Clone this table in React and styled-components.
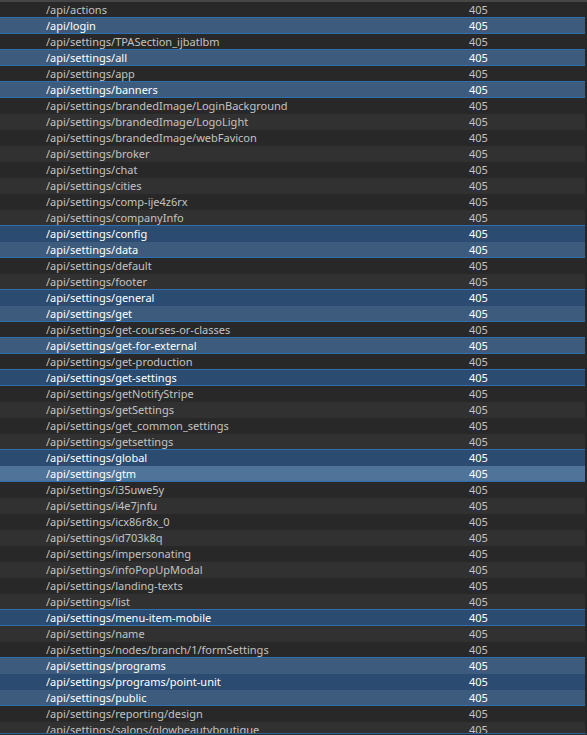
import React from "react";
import styled, { createGlobalStyle, css } from "styled-components";

const Global = createGlobalStyle`
  html, body { margin: 0; padding: 0; background: #2b2b2b; }
  body { font-family: "Noto Sans", "Open Sans", sans-serif; overflow: hidden; }
`;

const Frame = styled.div`
  width: 587px;
  height: 735px;
  box-sizing: border-box;
  border-top: 2px solid #464646;
  background: #2b2b2b;
  display: flex;
  flex-direction: column;
`;

const List = styled.div`
  height: 731px;
  overflow: hidden;
  border-bottom: 1px solid #2f6295;
  border-right: 2px solid #262626;
  display: flex;
  flex-direction: column;
`;

const tones = {
  even: { bg: "#282828", fg: "#c3c3c3" },
  odd: { bg: "#313131", fg: "#c3c3c3" },
  light: { bg: "#3d5c7d", fg: "#ffffff" },
  dark: { bg: "#2b4c70", fg: "#ffffff" },
  hot: { bg: "#4f7399", fg: "#ffffff" },
};

const LINE = "#2f6eae";

const Row = styled.div`
  flex: 0 0 16px;
  height: 16px;
  display: grid;
  grid-template-columns: 423px 1fr;
  padding-left: 46px;
  align-items: center;
  font-size: 11px;
  line-height: 16px;
  white-space: nowrap;
  background: ${(p) => tones[p.$tone].bg};
  color: ${(p) => tones[p.$tone].fg};
  ${(p) => {
    const s = [];
    if (p.$top) s.push(`0 -1px 0 ${LINE}`);
    if (p.$bottom) s.push(`inset 0 -1px 0 ${LINE}`);
    return s.length ? css`box-shadow: ${s.join(", ")};` : "";
  }}
`;

const Path = styled.span`
  overflow: hidden;
`;

const Code = styled.span``;

// [path, tone, topLine, bottomLine]
const rows = [
  ["/api/actions"],
  ["/api/login", "light", 1, 1],
  ["/api/settings/TPASection_ijbatlbm"],
  ["/api/settings/all", "light", 1, 1],
  ["/api/settings/app"],
  ["/api/settings/banners", "light", 1, 1],
  ["/api/settings/brandedImage/LoginBackground"],
  ["/api/settings/brandedImage/LogoLight"],
  ["/api/settings/brandedImage/webFavicon"],
  ["/api/settings/broker"],
  ["/api/settings/chat"],
  ["/api/settings/cities"],
  ["/api/settings/comp-ije4z6rx"],
  ["/api/settings/companyInfo"],
  ["/api/settings/config", "dark", 1, 0],
  ["/api/settings/data", "light", 0, 1],
  ["/api/settings/default"],
  ["/api/settings/footer"],
  ["/api/settings/general", "dark", 1, 0],
  ["/api/settings/get", "light", 0, 1],
  ["/api/settings/get-courses-or-classes"],
  ["/api/settings/get-for-external", "light", 1, 1],
  ["/api/settings/get-production"],
  ["/api/settings/get-settings", "dark", 1, 1],
  ["/api/settings/getNotifyStripe"],
  ["/api/settings/getSettings"],
  ["/api/settings/get_common_settings"],
  ["/api/settings/getsettings"],
  ["/api/settings/global", "dark", 1, 0],
  ["/api/settings/gtm", "hot", 0, 1],
  ["/api/settings/i35uwe5y"],
  ["/api/settings/i4e7jnfu"],
  ["/api/settings/icx86r8x_0"],
  ["/api/settings/id703k8q"],
  ["/api/settings/impersonating"],
  ["/api/settings/infoPopUpModal"],
  ["/api/settings/landing-texts"],
  ["/api/settings/list"],
  ["/api/settings/menu-item-mobile", "dark", 1, 1],
  ["/api/settings/name"],
  ["/api/settings/nodes/branch/1/formSettings"],
  ["/api/settings/programs", "light", 1, 0],
  ["/api/settings/programs/point-unit", "dark", 0, 0],
  ["/api/settings/public", "light", 0, 1],
  ["/api/settings/reporting/design"],
  ["/api/settings/salons/glowbeautyboutique"],
];

export default function App() {
  return (
    <>
      <Global />
      <Frame>
        <List>
          {rows.map(([path, tone, top, bottom], i) => (
            <Row
              key={path}
              $tone={tone || (i % 2 === 0 ? "even" : "odd")}
              $top={!!top}
              $bottom={!!bottom}
            >
              <Path>{path}</Path>
              <Code>405</Code>
            </Row>
          ))}
        </List>
      </Frame>
    </>
  );
}
